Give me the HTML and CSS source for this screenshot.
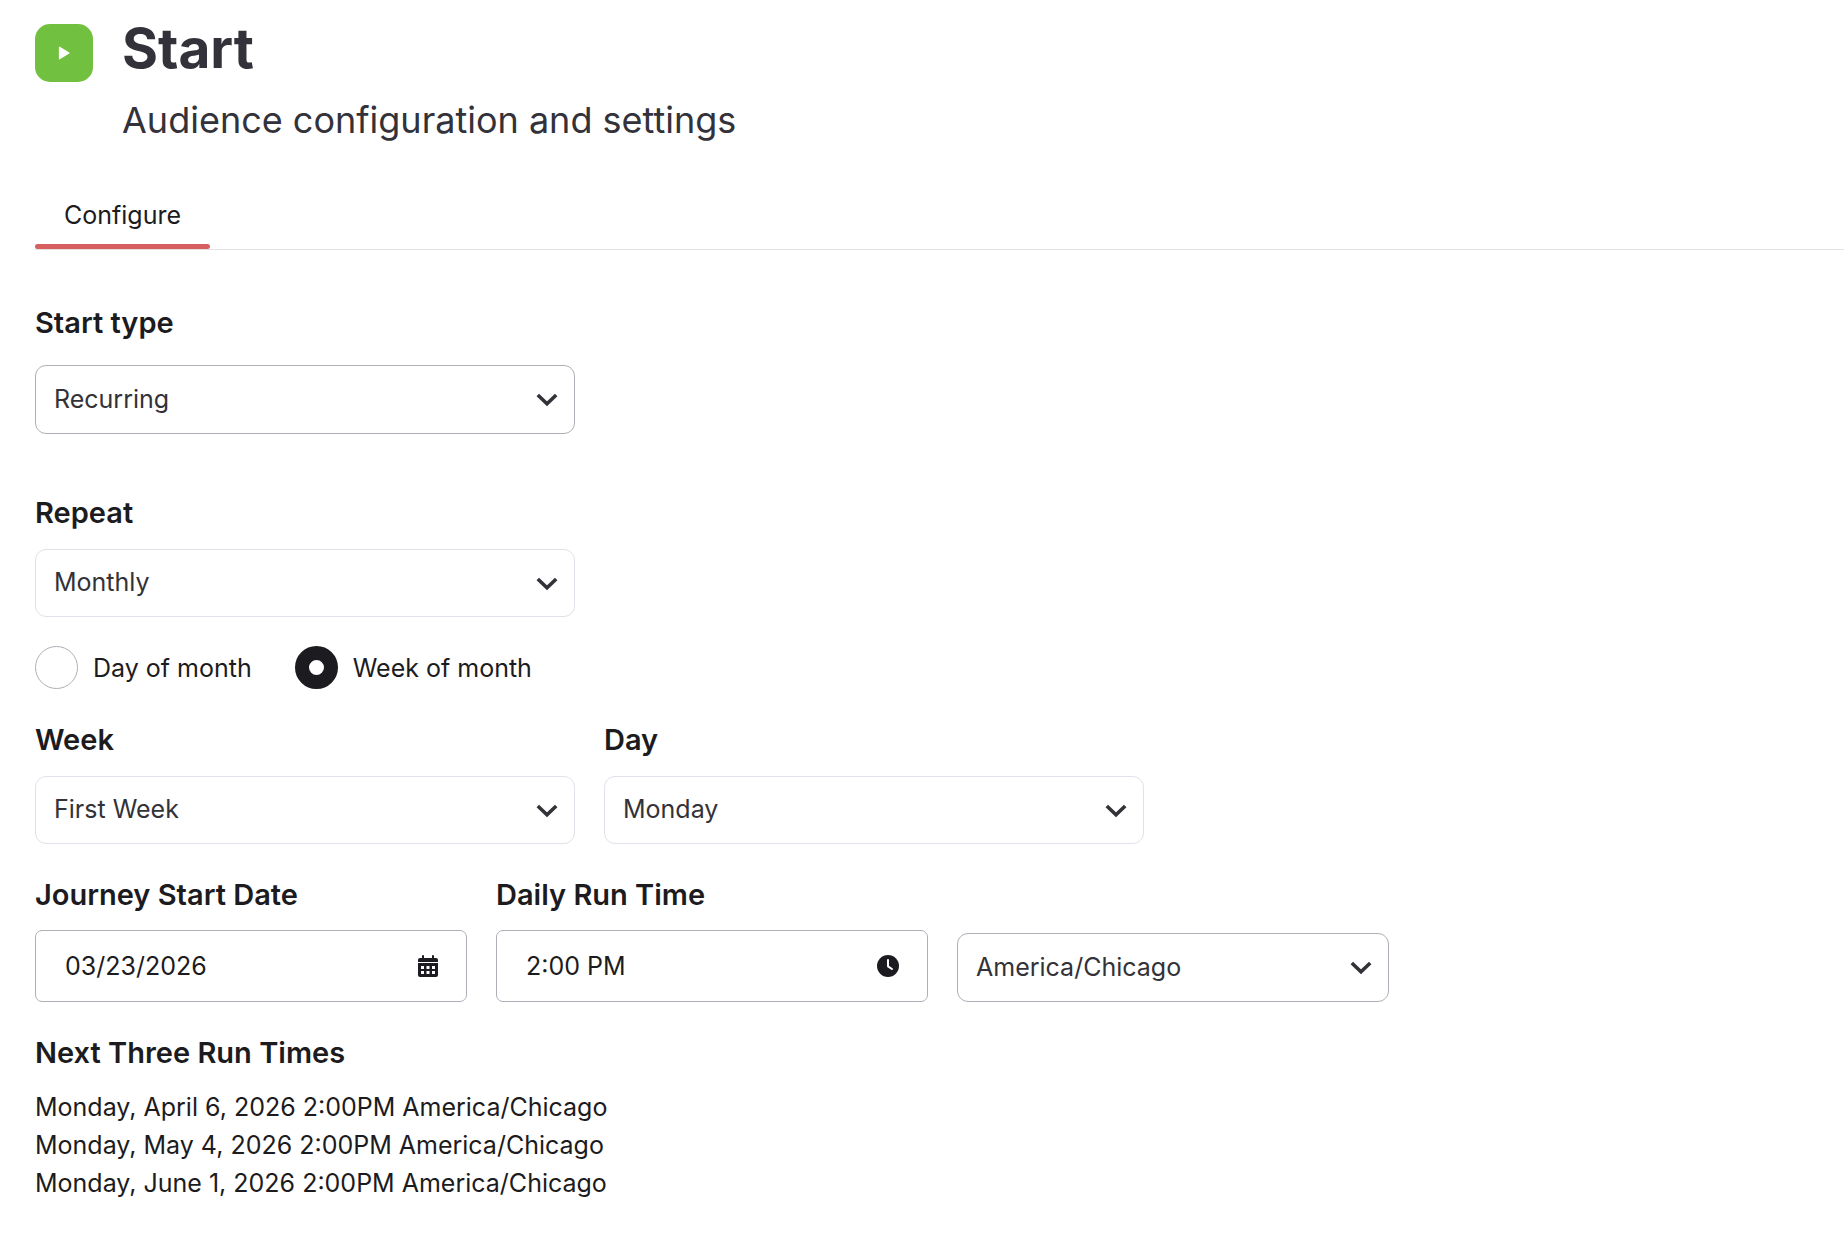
FILE: index.html
```html
<!DOCTYPE html>
<html lang="en">
    <head>
        <meta charset="utf-8">
        <title>Start</title>
        <link rel="stylesheet" href="styles.css">
    </head>
    <body>
        <!-- shared chevron for the selects -->
        <svg class="sprite" aria-hidden="true">
            <symbol id="chevron" viewBox="0 0 22 14">
                <path d="M1.800 2l9.200 8.800L20.200 2" fill="none" stroke="currentColor" stroke-width="3.600"/>
            </symbol>
        </svg>

        <header class="header">
            <div class="badge">
                <svg width="12" height="14" viewBox="0 0 12 14" aria-hidden="true">
                    <path d="M1.500 1.200v11.600L11 7z" fill="#fff" stroke="#fff" stroke-width="1.200" stroke-linejoin="round"/>
                </svg>
            </div>
            <div>
                <h1 class="title">Start</h1>
                <p class="subtitle">Audience configuration and settings</p>
            </div>
        </header>

        <nav class="tabs">
            <button class="tab" type="button">Configure</button>
        </nav>

        <form class="form">
            <div class="field start-type">
                <label for="startType">Start type</label>
                <div class="select dark">
                    <select id="startType"><option>Recurring</option></select>
                    <svg class="chevron" aria-hidden="true"><use href="#chevron"/></svg>
                </div>
            </div>

            <div class="field repeat">
                <label for="repeat">Repeat</label>
                <div class="select">
                    <select id="repeat"><option>Monthly</option></select>
                    <svg class="chevron" aria-hidden="true"><use href="#chevron"/></svg>
                </div>
            </div>

            <div class="radios">
                <label class="radio"><input type="radio" name="mode">Day of month</label>
                <label class="radio"><input type="radio" name="mode" checked>Week of month</label>
            </div>

            <div class="row">
                <div class="field">
                    <label for="week">Week</label>
                    <div class="select">
                        <select id="week"><option>First Week</option></select>
                        <svg class="chevron" aria-hidden="true"><use href="#chevron"/></svg>
                    </div>
                </div>
                <div class="field">
                    <label for="day">Day</label>
                    <div class="select">
                        <select id="day"><option>Monday</option></select>
                        <svg class="chevron" aria-hidden="true"><use href="#chevron"/></svg>
                    </div>
                </div>
            </div>

            <div class="row schedule">
                <div class="field small">
                    <label for="startDate">Journey Start Date</label>
                    <div class="textbox">
                        <input id="startDate" type="text" value="03/23/2026">
                        <svg width="20" height="22" viewBox="0 0 20 22" aria-hidden="true">
                            <path fill="currentColor" fill-rule="evenodd" d="M5 0q1 0 1 1v2h8V1q0-1 1-1t1 1v2h2q2 0 2 2v2H0V5q0-2 2-2h2V1q0-1 1-1zM0 8h20v12q0 2-2 2H2q-2 0-2-2zM3 11v3h3v-3zM8.500 11v3h3v-3zM14 11v3h3v-3zM3 16v3h3v-3zM8.500 16v3h3v-3zM14 16v3h3v-3z"/>
                        </svg>
                    </div>
                </div>
                <div class="field small">
                    <label for="runTime">Daily Run Time</label>
                    <div class="textbox">
                        <input id="runTime" type="text" value="2:00 PM">
                        <svg width="22" height="22" viewBox="0 0 22 22" aria-hidden="true">
                            <circle cx="11" cy="11" r="11" fill="currentColor"/>
                            <path d="M11 5v6.300l4 2.700" fill="none" stroke="#fff" stroke-width="2" stroke-linecap="round" stroke-linejoin="round"/>
                        </svg>
                    </div>
                </div>
                <div class="field small">
                    <div class="select dark">
                        <select id="timezone" aria-label="Timezone"><option>America/Chicago</option></select>
                        <svg class="chevron" aria-hidden="true"><use href="#chevron"/></svg>
                    </div>
                </div>
            </div>

            <section>
                <h2 class="heading">Next Three Run Times</h2>
                <ul class="runs">
                    <li>Monday, April 6, 2026 2:00PM America/Chicago</li>
                    <li>Monday, May 4, 2026 2:00PM America/Chicago</li>
                    <li>Monday, June 1, 2026 2:00PM America/Chicago</li>
                </ul>
            </section>
        </form>
    </body>
</html>
```
FILE: styles.css
```css
*{
    box-sizing: border-box;
}
body{
    margin: 0;
    padding: 24px 0 24px 35px;
    background: #fff;
    color: #1c1b20;
    font-family: Inter, "Liberation Sans", sans-serif;
    font-size: 25px;
}
input, select, button{
    font: inherit;
    color: inherit;
}
.sprite{
    display: none;
}

/* header */
.header{
    display: flex;
    gap: 29px;
    color: #33323a;
}
.badge{
    display: flex;
    align-items: center;
    justify-content: center;
    width: 58px;
    height: 58px;
    border-radius: 15px;
    background: #72c040;
}
.title{
    margin: 0 0 26px;
    font-size: 55px;
    line-height: 48px;
    font-weight: 700;
}
.subtitle{
    margin: 0;
    font-size: 36px;
    line-height: 44px;
}

/* tabs */
.tabs{
    display: flex;
    margin-top: 42px;
    border-bottom: 1px solid #e1e1e6;
}
.tab{
    position: relative;
    padding: 15px 29px 18px;
    border: 0;
    background: none;
    line-height: 32px;
}
.tab::after{
    content: "";
    position: absolute;
    left: 0;
    right: 0;
    bottom: 0;
    height: 5px;
    border-radius: 3px;
    background: #d65f5f;
}

/* form */
.form{
    display: flex;
    flex-direction: column;
    gap: 34px;
    margin-top: 56px;
}
.field{
    display: flex;
    flex-direction: column;
    gap: 19px;
    width: 540px;
}
.small{
    gap: 18px;
    width: 432px;
}
.start-type{
    gap: 25px;
    margin-bottom: 28px;
}
.repeat{
    margin-bottom: -5px;
}
.field label, .heading{
    margin: 0;
    font-size: 29px;
    line-height: 34px;
    font-weight: 600;
}
.row{
    display: flex;
    flex-wrap: wrap;
    gap: 29px;
}
.schedule{
    align-items: flex-end;
}
.select{
    position: relative;
    color: #333238;
}
.select select{
    display: block;
    appearance: none;
    width: 100%;
    height: 68px;
    padding: 0 50px 2px 18px;
    border: 1px solid #e1e1ea;
    border-radius: 11px;
    background: #fff;
}
.dark select{
    height: 69px;
    border-color: #b0afb8;
}
.chevron{
    position: absolute;
    top: 28px;
    right: 17px;
    width: 22px;
    height: 14px;
    pointer-events: none;
}
.textbox{
    display: flex;
    align-items: center;
    height: 72px;
    padding: 0 28px 0 29px;
    border: 1px solid #b0afb8;
    border-radius: 7px;
}
.textbox input{
    flex: 1;
    min-width: 0;
    padding: 0;
    border: 0;
    outline: none;
    background: none;
}

/* radios */
.radios{
    display: flex;
    gap: 43px;
}
.radio{
    display: flex;
    align-items: center;
    gap: 15px;
}
.radio input{
    appearance: none;
    width: 43px;
    height: 43px;
    margin: 0;
    border: 1px solid #b0afb8;
    border-radius: 50%;
}
.radio input:checked{
    border: 14px solid #1c1b20;
}

.runs{
    margin: 18px 0 0;
    padding: 0;
    list-style: none;
    line-height: 38px;
}
```
